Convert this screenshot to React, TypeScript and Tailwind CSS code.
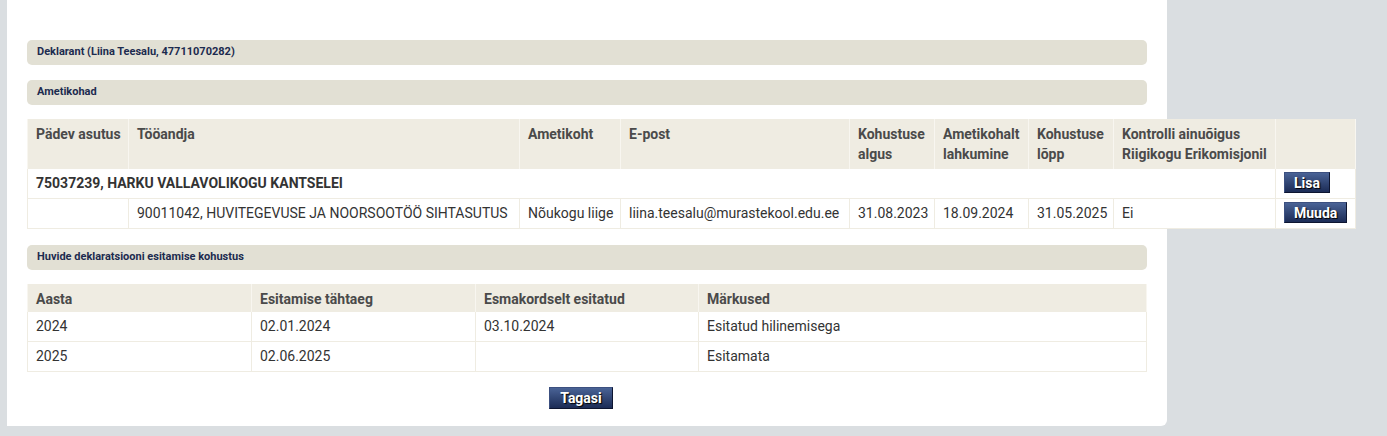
const bar = "h-[25px] rounded-[5px] bg-[#e2e0d4] flex items-center px-[10px] text-[11px] font-bold text-[#1c2b4f]";
const th = "align-top text-left font-bold text-[14px] leading-[20px] text-[#4a4a4a] px-[8px] pt-[5px] border-x border-[#f8f6f0]";
const td = "h-[30px] px-[8px] text-[14px] text-[#333] bg-white border border-[#efece2] whitespace-nowrap";
const btn =
  "h-[21px] px-[9px] text-[14px] font-bold text-white leading-none bg-gradient-to-b from-[#4a6396] to-[#1c2c56] border border-[#3c5080] border-r-[#0d1530] border-b-[#0d1530] [text-shadow:1px_1px_1px_#000]";

function Bar({ children }: { children?: React.ReactNode }) {
  return <div className={bar}>{children}</div>;
}

export default function App() {
  return (
    <div className="w-[1387px] h-[436px] bg-[#dadee1] pl-[7px] overflow-hidden" style={{ fontFamily: "Roboto, 'Liberation Sans', sans-serif" }}>
      <div className="w-[1160px] h-[426px] bg-white rounded-br-[6px] px-[20px] pt-[40px] flex flex-col">
        <Bar>Deklarant (Liina Teesalu, 47711070282)</Bar>
        <div className="mt-[15px]">
          <Bar>Ametikohad</Bar>
        </div>
        <table className="mt-[14px] w-[1328px] table-fixed border-collapse bg-white">
          <colgroup>
            <col className="w-[101px]" />
            <col className="w-[391px]" />
            <col className="w-[101px]" />
            <col className="w-[229px]" />
            <col className="w-[85px]" />
            <col className="w-[94px]" />
            <col className="w-[85px]" />
            <col className="w-[162px]" />
            <col className="w-[80px]" />
          </colgroup>
          <thead>
            <tr className="h-[49px] bg-[#efece2]">
              <th className={th + " whitespace-nowrap"}>Pädev asutus</th>
              <th className={th}>Tööandja</th>
              <th className={th}>Ametikoht</th>
              <th className={th}>E-post</th>
              <th className={th}>Kohustuse algus</th>
              <th className={th}>Ametikohalt lahkumine</th>
              <th className={th}>Kohustuse lõpp</th>
              <th className={th}>Kontrolli ainuõigus Riigikogu Erikomisjonil</th>
              <th className={th}></th>
            </tr>
          </thead>
          <tbody>
            <tr>
              <td colSpan={8} className={td + " font-bold"}>75037239, HARKU VALLAVOLIKOGU KANTSELEI</td>
              <td className={td}>
                <button className={btn}>Lisa</button>
              </td>
            </tr>
            <tr>
              <td className={td}></td>
              <td className={td}>90011042, HUVITEGEVUSE JA NOORSOOTÖÖ SIHTASUTUS</td>
              <td className={td}>Nõukogu liige</td>
              <td className={td}>liina.teesalu@murastekool.edu.ee</td>
              <td className={td}>31.08.2023</td>
              <td className={td}>18.09.2024</td>
              <td className={td}>31.05.2025</td>
              <td className={td}>Ei</td>
              <td className={td}>
                <button className={btn}>Muuda</button>
              </td>
            </tr>
          </tbody>
        </table>
        <div className="mt-[16px]">
          <Bar>Huvide deklaratsiooni esitamise kohustus</Bar>
        </div>
        <table className="mt-[14px] w-[1120px] table-fixed border-collapse bg-white">
          <colgroup>
            <col className="w-[224px]" />
            <col className="w-[224px]" />
            <col className="w-[223px]" />
            <col />
          </colgroup>
          <thead>
            <tr className="h-[28px] bg-[#efece2]">
              <th className={th + " align-middle pt-0"}>Aasta</th>
              <th className={th + " align-middle pt-0"}>Esitamise tähtaeg</th>
              <th className={th + " align-middle pt-0"}>Esmakordselt esitatud</th>
              <th className={th + " align-middle pt-0"}>Märkused</th>
            </tr>
          </thead>
          <tbody>
            <tr>
              <td className={td + " h-[29px]"}>2024</td>
              <td className={td + " h-[29px]"}>02.01.2024</td>
              <td className={td + " h-[29px]"}>03.10.2024</td>
              <td className={td + " h-[29px]"}>Esitatud hilinemisega</td>
            </tr>
            <tr>
              <td className={td + " h-[29px]"}>2025</td>
              <td className={td + " h-[29px]"}>02.06.2025</td>
              <td className={td + " h-[29px]"}></td>
              <td className={td + " h-[29px]"}>Esitamata</td>
            </tr>
          </tbody>
        </table>
        <div className="mt-[15px] flex justify-center pr-[12px]">
          <button className={btn + " h-[22px] px-[10px]"}>Tagasi</button>
        </div>
      </div>
    </div>
  );
}
